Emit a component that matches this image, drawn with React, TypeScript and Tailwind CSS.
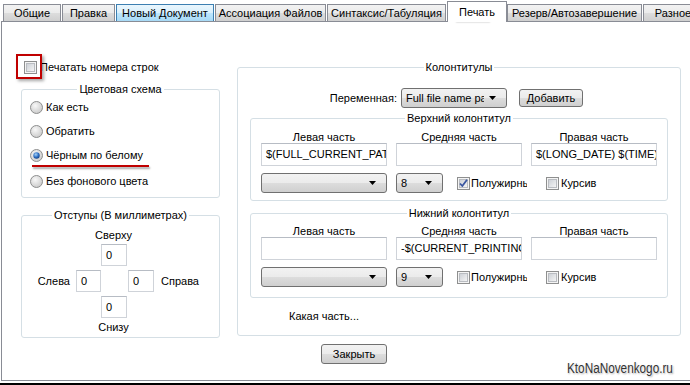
import React from "react";

const FONT = "font-['Liberation_Sans',Arial,sans-serif]";

function Tab({ label, w, ml, active, hover }: { label: string; w: number; ml: number; active?: boolean; hover?: boolean }) {
  if (active) {
    return (
      <div
        style={{ width: w, marginLeft: ml }}
        className="relative z-10 -mb-px h-[21px] shrink-0 border border-b-0 border-[#898c95] bg-white flex items-center justify-center pt-[1px]"
      >
        {label}
      </div>
    );
  }
  return (
    <div
      style={{ width: w, marginLeft: ml }}
      className={
        "h-[17px] shrink-0 border border-b-0 flex items-center justify-center whitespace-nowrap overflow-hidden " +
        (hover
          ? "border-[#3c7fb1] bg-[linear-gradient(#eaf6fd,#d9f0fc_50%,#bee6fd_50%,#a7d9f5)]"
          : "border-[#898c95] bg-[linear-gradient(#f2f2f2,#ebebeb_50%,#dddddd_50%,#cfcfcf)]")
      }
    >
      {label}
    </div>
  );
}

function Checkbox({ checked, id }: { checked?: boolean; id: string }) {
  return (
    <svg width="13" height="13" viewBox="0 0 13 13" className="shrink-0">
      <defs>
        <linearGradient id={id} x1="0" y1="0" x2="1" y2="1">
          <stop offset="0" stopColor="#cbcfd5" />
          <stop offset="1" stopColor="#f6f6f6" />
        </linearGradient>
      </defs>
      <rect x="0.5" y="0.5" width="12" height="12" fill="#f4f4f4" stroke="#8e8f8f" />
      <rect x="2.5" y="2.5" width="8" height="8" fill={`url(#${id})`} stroke="#b9bcc1" />
      {checked && (
        <path d="M3 6.5 L5.3 9 L10 2.8" fill="none" stroke="#3a56a0" strokeWidth="1.8" strokeLinejoin="round" />
      )}
    </svg>
  );
}

function Radio({ checked, id }: { checked?: boolean; id: string }) {
  return (
    <svg width="13" height="13" viewBox="0 0 13 13" className="shrink-0">
      <defs>
        <radialGradient id={id} cx="0.4" cy="0.35" r="0.7">
          <stop offset="0" stopColor="#f8f8f8" />
          <stop offset="1" stopColor="#c9c9c9" />
        </radialGradient>
        <radialGradient id={id + "d"} cx="0.4" cy="0.35" r="0.7">
          <stop offset="0" stopColor="#a8d4f7" />
          <stop offset="0.6" stopColor="#2a6cc2" />
          <stop offset="1" stopColor="#163e7a" />
        </radialGradient>
      </defs>
      <circle cx="6.5" cy="6.5" r="6" fill={`url(#${id})`} stroke="#8e8f8f" />
      {checked && <circle cx="6.5" cy="6.5" r="3.2" fill={`url(#${id}d)`} />}
    </svg>
  );
}

function Arrow() {
  return (
    <svg width="8" height="5" viewBox="0 0 8 5" className="shrink-0">
      <path d="M0 0 H7 L3.5 4 Z" fill="#000" />
    </svg>
  );
}

function Combo({ text, w }: { text: string; w: number }) {
  return (
    <div
      style={{ width: w }}
      className="h-[20px] shrink-0 rounded-[3px] border border-[#707070] bg-[linear-gradient(#f2f2f2,#ebebeb_50%,#dddddd_50%,#cfcfcf)] flex items-center pl-[4px] pr-[9px]"
    >
      <span className="flex-1 mr-[5px] overflow-hidden whitespace-nowrap">{text}</span>
      <Arrow />
    </div>
  );
}

function Btn({ text, w, h = 20 }: { text: string; w: number; h?: number }) {
  return (
    <div
      style={{ width: w, height: h }}
      className="shrink-0 rounded-[3px] border border-[#707070] bg-[linear-gradient(#f2f2f2,#ebebeb_50%,#dddddd_50%,#cfcfcf)] flex items-center justify-center"
    >
      {text}
    </div>
  );
}

function TextBox({ text, w, h = 23 }: { text?: string; w: number; h?: number }) {
  return (
    <div
      style={{ width: w, height: h }}
      className="shrink-0 border border-[#cfd3d9] border-t-[#b7bcc4] bg-white pl-[4px] pt-[3px] leading-[14px] overflow-hidden whitespace-nowrap"
    >
      {text}
    </div>
  );
}

function Legend({ text }: { text: string }) {
  return <legend className="mx-auto px-[2px] h-[14px] leading-[14px]">{text}</legend>;
}

function HeaderGroup({
  uid,
  title,
  left,
  mid,
  right,
  size,
  bold,
  labelsMt,
  pb,
  mt,
}: {
  uid: string;
  title: string;
  left?: string;
  mid?: string;
  right?: string;
  size: string;
  bold?: boolean;
  labelsMt: number;
  pb: number;
  mt: number;
}) {
  return (
    <fieldset
      style={{ marginTop: mt, paddingBottom: pb }}
      className="ml-[12px] w-[418px] rounded-[3px] border border-[#d5dfe5]"
    >
      <Legend text={title} />
      <div style={{ marginTop: labelsMt }} className="ml-[10px] grid grid-cols-[126px_126px_126px] gap-x-[9px]">
        <div className="h-[14px] leading-[14px] text-center">Левая часть</div>
        <div className="h-[14px] leading-[14px] text-center">Средняя часть</div>
        <div className="h-[14px] leading-[14px] text-center">Правая часть</div>
        <div className="-mt-[1px]">
          <TextBox text={left} w={126} />
        </div>
        <div className="-mt-[1px]">
          <TextBox text={mid} w={126} />
        </div>
        <div className="-mt-[1px]">
          <TextBox text={right} w={126} />
        </div>
      </div>
      <div className="ml-[10px] mt-[7px] flex items-center h-[20px]">
        <Combo text="" w={126} />
        <div className="ml-[9px]">
          <Combo text={size} w={47} />
        </div>
        <div className="ml-[14px] flex items-center">
          <Checkbox checked={bold} id={uid + "b"} />
          <span className="ml-[1px] w-[56px] overflow-hidden whitespace-nowrap">Полужирный</span>
        </div>
        <div className="ml-[19px] flex items-center">
          <Checkbox id={uid + "i"} />
          <span className="ml-[2px] whitespace-nowrap">Курсив</span>
        </div>
      </div>
    </fieldset>
  );
}

export default function App() {
  return (
    <div className={"relative w-[690px] h-[385px] bg-white overflow-hidden text-[11px] text-black " + FONT}>
      {/* tabs */}
      <div className="flex items-end h-[21px]">
        <Tab label="Общие" w={58} ml={3} />
        <Tab label="Правка" w={53} ml={1} />
        <Tab label="Новый Документ" w={98} ml={1} hover />
        <Tab label="Ассоциация Файлов" w={111} ml={1} />
        <Tab label="Синтаксис/Табуляция" w={119} ml={1} />
        <Tab label="Печать" w={60} ml={1} active />
        <Tab label="Резерв/Автозавершение" w={135} ml={0} />
        <Tab label="Разное" w={60} ml={1} />
      </div>

      {/* panel */}
      <div className="ml-[1px] h-[360px] border-l border-t border-b border-[#898c95] flex">
        {/* left column */}
        <div className="w-[235px] shrink-0 flex flex-col">
          <div className="mt-[38px] ml-[22px] h-[14px] flex items-center">
            <Checkbox id="pn" />
            <span className="ml-[3px] whitespace-nowrap">Печатать номера строк</span>
          </div>

          <fieldset className="mt-[8px] ml-[19px] w-[199px] rounded-[3px] border border-[#d5dfe5] pb-[4px]">
            <Legend text="Цветовая схема" />
            <div className="-mt-[1px] pl-[8px]">
              <div className="h-[24px] flex items-center">
                <Radio id="r1" />
                <span className="ml-[3px]">Как есть</span>
              </div>
              <div className="h-[24px] flex items-center">
                <Radio id="r2" />
                <span className="ml-[3px]">Обратить</span>
              </div>
              <div className="h-[24px] flex items-center">
                <Radio id="r3" checked />
                <span className="ml-[3px]">Чёрным по белому</span>
              </div>
              <div className="mt-[2px] h-[24px] flex items-center">
                <Radio id="r4" />
                <span className="ml-[3px]">Без фонового цвета</span>
              </div>
            </div>
          </fieldset>

          <fieldset className="mt-[10px] ml-[19px] w-[199px] rounded-[3px] border border-[#d5dfe5] pb-[3px]">
            <Legend text="Отступы (В миллиметрах)" />
            <div className="mt-[6px] ml-[79px] w-[25px] h-[14px] leading-[14px] flex justify-center whitespace-nowrap">
              Сверху
            </div>
            <div className="mt-[2px] ml-[79px]">
              <TextBox text="0" w={26} h={22} />
            </div>
            <div className="mt-[4px] flex items-center">
              <div className="w-[48px] text-right">Слева</div>
              <div className="ml-[6px]">
                <TextBox text="0" w={25} h={22} />
              </div>
              <div className="ml-[27px]">
                <TextBox text="0" w={26} h={22} />
              </div>
              <div className="ml-[7px]">Справа</div>
            </div>
            <div className="mt-[4px] ml-[79px]">
              <TextBox text="0" w={26} h={22} />
            </div>
            <div className="mt-[2px] ml-[79px] w-[25px] h-[14px] leading-[14px] flex justify-center whitespace-nowrap">
              Снизу
            </div>
          </fieldset>
        </div>

        {/* right column */}
        <div className="flex flex-col">
          <fieldset className="mt-[38px] w-[444px] rounded-[3px] border border-[#d5dfe5] pb-[12px]">
            <Legend text="Колонтитулы" />
            <div className="mt-[14px] h-[20px] flex items-center">
              <div className="w-[159px] text-right">Переменная:</div>
              <div className="ml-[4px]">
                <Combo text="Full file name path" w={106} />
              </div>
              <div className="ml-[12px]">
                <Btn text="Добавить" w={64} h={18} />
              </div>
            </div>

            <HeaderGroup
              uid="top"
              title="Верхний колонтитул"
              left="$(FULL_CURRENT_PATH)"
              right="$(LONG_DATE) $(TIME)"
              size="8"
              bold
              labelsMt={5}
              pb={7}
              mt={3}
            />
            <HeaderGroup
              uid="bot"
              title="Нижний колонтитул"
              mid="-$(CURRENT_PRINTING_PAGE)-"
              size="9"
              labelsMt={4}
              pb={10}
              mt={5}
            />

            <div className="mt-[11px] ml-[51px] h-[14px] leading-[14px]">Какая часть...</div>
          </fieldset>

          <div className="mt-[8px] ml-[84px]">
            <Btn text="Закрыть" w={66} h={20} />
          </div>
        </div>
      </div>
      <div className="mt-[2px] h-[2px] bg-black" />

      {/* annotations */}
      <div className="absolute left-[455px] top-[18px] w-[34px] h-[2px] bg-[#c00000] shadow-[1px_2px_2px_rgba(0,0,0,0.35)]" />
      <div className="absolute left-[16px] top-[54px] w-[26px] h-[25px] border-2 border-[#c00000] shadow-[2px_2px_3px_rgba(0,0,0,0.35)]" />
      <div className="absolute left-[32px] top-[165px] w-[117px] h-[2px] bg-[#c00000] shadow-[1px_2px_2px_rgba(0,0,0,0.35)]" />

      <div className="absolute left-[567px] top-[360px] origin-left scale-x-[0.84] text-[14px] leading-[16px] text-[#333] font-['Liberation_Sans',Arial,sans-serif] [text-shadow:0_0_2px_#fff,0_0_3px_#fff,1px_1px_2px_rgba(0,0,0,0.4)]">
        KtoNaNovenkogo.ru
      </div>
    </div>
  );
}
